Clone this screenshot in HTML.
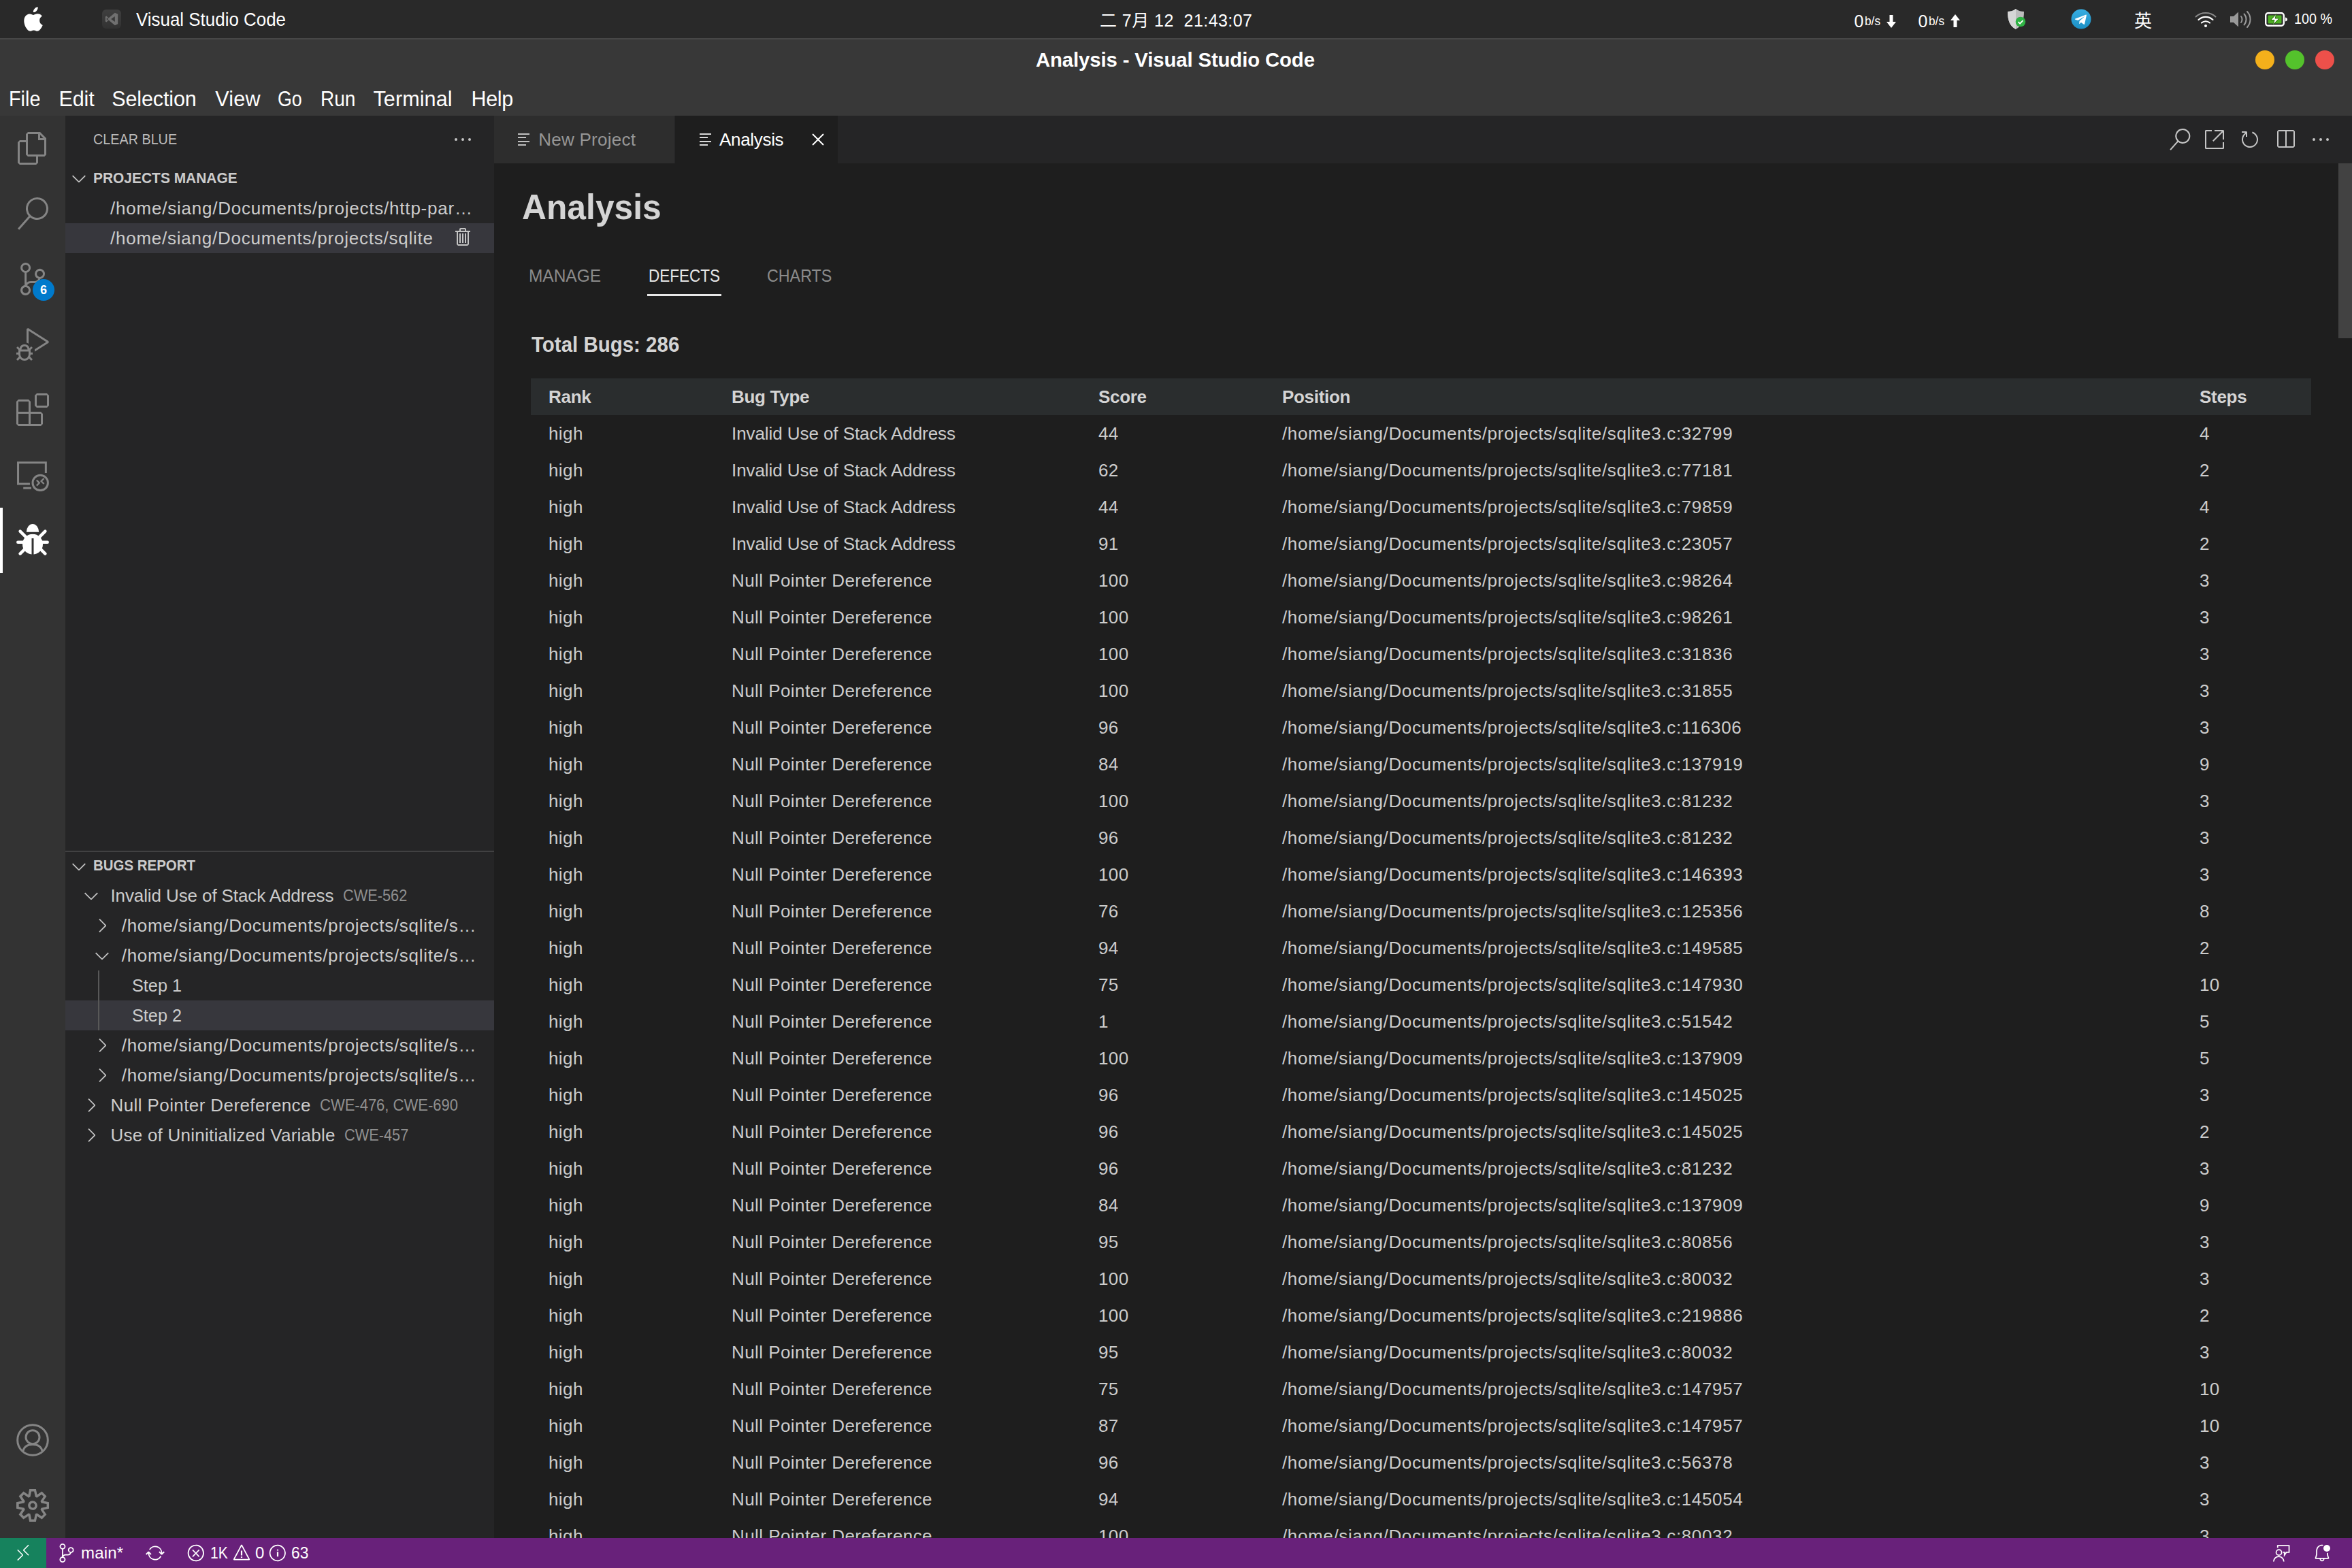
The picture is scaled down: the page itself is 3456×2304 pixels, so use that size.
<!DOCTYPE html>
<html lang="en"><head><meta charset="utf-8"><title>Analysis - Visual Studio Code</title>
<style>
html,body{margin:0;padding:0;}
body{width:3456px;height:2304px;overflow:hidden;background:#1e1e1e;position:relative;font-family:"Liberation Sans","Noto Sans CJK SC",sans-serif;color:#ccc;}
div{box-sizing:border-box;}
.tbl{position:absolute;left:780px;top:556px;width:2616px;}
.row{position:absolute;left:0;width:2616px;height:54px;font-size:26px;line-height:54px;white-space:nowrap;color:#ccc;}
.row span{position:absolute;top:0;}
.c1{left:26px;}.c2{left:295px;}.c3{left:834px;}.c4{left:1104px;}.c5{left:2452px;}
.hd{background:#2a2d2e;font-weight:bold;color:#d4d4d4;}
</style></head><body>

<div style="position:absolute;left:0px;top:0px;width:3456px;height:56px;background:#292929;"></div>
<div style="position:absolute;left:0px;top:56px;width:3456px;height:2px;background:#474747;"></div>
<div style="position:absolute;left:0px;top:58px;width:3456px;height:112px;background:#383838;"></div>
<svg style="position:absolute;left:32px;top:9px" width="32" height="38" viewBox="0 0 170 200" fill="#fff"><path d="M150.4 172.3c-7.4 11.1-15.300 21.900-27.300 22.100-12 .3-15.900-7.100-29.500-7.100-13.700 0-17.900 6.900-29.300 7.400-11.700.400-20.600-11.800-28.100-22.600C20.900 150 9.200 109.500 24.900 82.200c7.800-13.600 21.800-22.100 36.900-22.400 11.500-.2 22.400 7.800 29.500 7.800 7 0 20.200-9.600 34.100-8.200 5.800.2 22.100 2.300 32.600 17.700-.8.600-19.400 11.400-19.200 34 .2 27 23.700 36 24 36.100-.3.600-3.800 12.900-12.400 25.100zM99.200 19.700C105.700 12.100 116.600 6.400 125.600 6c1.200 10.500-3.100 21.100-9.300 28.600-6.300 7.600-16.500 13.500-26.600 12.700-1.400-10.300 3.700-21.100 9.500-27.600z"/></svg>
<div style="position:absolute;left:150px;top:14px;width:28px;height:28px;border-radius:6px;background:linear-gradient(#3f3f3f,#323232)"></div>
<svg style="position:absolute;left:154px;top:18px" width="20" height="20" viewBox="0 0 100 100"><path d="M74 4 L96 14 V86 L74 96 L28 58 L12 72 L4 68 V32 L12 28 L28 42 Z M74 30 L46 50 L74 70 Z M14 40 V60 L26 50 Z" fill="#707070" fill-rule="evenodd"/></svg>
<div style="position:absolute;left:200px;top:14.92px;font-size:27.5px;line-height:1;color:#fff;letter-spacing:0px;white-space:nowrap;transform:scaleX(0.9426);transform-origin:0 0;">Visual Studio Code</div>
<div class="clock" style="position:absolute;left:1616px;top:17.64px;font-size:25px;line-height:1;color:#fff;letter-spacing:0.45px;white-space:nowrap;">二 7月 12&nbsp; 21:43:07</div>
<div style="position:absolute;left:2724.5px;top:19.14px;font-size:25px;line-height:1;color:#fff;letter-spacing:0px;white-space:nowrap;">0</div>
<div style="position:absolute;left:2740px;top:22.26px;font-size:18px;line-height:1;color:#fff;letter-spacing:0px;white-space:nowrap;transform:scaleX(0.9579);transform-origin:0 0;">b/s</div>
<div style="position:absolute;left:2818.5px;top:19.14px;font-size:25px;line-height:1;color:#fff;letter-spacing:0px;white-space:nowrap;">0</div>
<div style="position:absolute;left:2834px;top:22.26px;font-size:18px;line-height:1;color:#fff;letter-spacing:0px;white-space:nowrap;transform:scaleX(0.9579);transform-origin:0 0;">b/s</div>
<svg style="position:absolute;left:2772px;top:22px" width="14" height="19" viewBox="0 0 14 19" fill="#fff"><path d="M4.500 0h5v10h4.500L7 19 0 10h4.500z"/></svg>
<svg style="position:absolute;left:2866px;top:21px" width="14" height="19" viewBox="0 0 14 19" fill="#fff"><path d="M4.500 19h5V9h4.500L7 0 0 9h4.500z"/></svg>
<svg style="position:absolute;left:2949px;top:12px" width="30" height="33" viewBox="0 0 30 33"><path d="M13 1 C9 4 5 5 1 5 C1 18 4 26 13 31 C22 26 25 18 25 5 C21 5 17 4 13 1z" fill="#bdbdbd"/><path d="M13 1 C9 4 5 5 1 5 C1 18 4 26 13 31z" fill="#d6d6d6"/><circle cx="20" cy="20" r="7.300" fill="#2fb344"/><path d="M16.500 20.200l2.600 2.500 4.400-4.600" stroke="#fff" stroke-width="1.800" fill="none"/></svg>
<svg style="position:absolute;left:3043px;top:13px" width="30" height="30" viewBox="0 0 30 30"><defs><linearGradient id="tg" x1="0" y1="0" x2="0" y2="1"><stop offset="0" stop-color="#37aee2"/><stop offset="1" stop-color="#1c8fc4"/></linearGradient></defs><circle cx="15" cy="15" r="14.500" fill="url(#tg)"/><path d="M6.500 14.600l15.200-5.900c.7-.3 1.300.2 1.100 1.200l-2.600 12.200c-.2.900-.7 1.100-1.400.7l-3.900-2.900-1.900 1.800c-.2.200-.4.400-.8.400l.3-4 7.200-6.500c.3-.3-.1-.4-.5-.2l-8.900 5.600-3.800-1.200c-.8-.3-.8-.8.000-1.200z" fill="#fff"/></svg>
<div style="position:absolute;left:3136px;top:16.49px;font-size:26px;line-height:1;color:#fff;letter-spacing:0px;white-space:nowrap;font-family:'Noto Sans CJK SC',sans-serif;">英</div>
<svg style="position:absolute;left:3225px;top:17px" width="32" height="24" viewBox="0 0 32 24" fill="none" stroke-linecap="round"><path d="M1.500 7.500C9.500 0 22.500 0 30.500 7.500" stroke="#8a8a8a" stroke-width="2"/><path d="M5.500 12C11.500 6.500 20.500 6.500 26.500 12" stroke="#fff" stroke-width="2.200"/><path d="M10 16.500c3.500-3 8.500-3 12 0" stroke="#fff" stroke-width="2.200"/><circle cx="16" cy="21" r="2" fill="#fff"/></svg>
<svg style="position:absolute;left:3276px;top:15px" width="34" height="27" viewBox="0 0 34 27" fill="none" stroke-linecap="round"><path d="M1 9h5l7-6.500v22L6 18H1z" fill="#999"/><path d="M17 9c2 2.500 2 6.500 0 9" stroke="#999" stroke-width="2"/><path d="M21.500 5.500c4 4.500 4 11.500 0 16" stroke="#999" stroke-width="2"/><path d="M26 2c6 6.500 6 16.500 0 23" stroke="#999" stroke-width="2"/></svg>
<svg style="position:absolute;left:3328px;top:18px" width="34" height="21" viewBox="0 0 34 21"><rect x="1.200" y="1.200" width="26.600" height="18.600" rx="3.500" fill="none" stroke="#fff" stroke-width="2.400"/><rect x="4.500" y="4.500" width="20" height="12" rx="1" fill="#4caf23"/><path d="M30 7.500c2 .5 3 1.500 3 3s-1 2.500-3 3z" fill="#fff"/><path d="M17 2.500l-8.500 9h5.500l-2.500 7 9.500-9.500h-6z" fill="#fff" stroke="#2c6e12" stroke-width="1"/></svg>
<div style="position:absolute;left:3371px;top:17.25px;font-size:22.5px;line-height:1;color:#fff;letter-spacing:0px;white-space:nowrap;transform:scaleX(0.8778);transform-origin:0 0;">100 %</div>
<div style="position:absolute;left:1522px;top:72.67px;font-size:29.33px;line-height:1;font-weight:bold;color:#fff;letter-spacing:-0.123px;white-space:nowrap;">Analysis - Visual Studio Code</div>
<div style="position:absolute;left:3314px;top:74px;width:28px;height:28px;border-radius:50%;background:#f4b01b"></div>
<div style="position:absolute;left:3358px;top:74px;width:28px;height:28px;border-radius:50%;background:#54c22c"></div>
<div style="position:absolute;left:3402px;top:74px;width:28px;height:28px;border-radius:50%;background:#ed504a"></div>
<div style="position:absolute;left:12.8px;top:130.18px;font-size:30.5px;line-height:1;color:#fff;letter-spacing:0px;white-space:nowrap;transform:scaleX(0.9441);transform-origin:0 0;">File</div>
<div style="position:absolute;left:86.4px;top:130.18px;font-size:30.5px;line-height:1;color:#fff;letter-spacing:-0.053px;white-space:nowrap;">Edit</div>
<div style="position:absolute;left:164.3px;top:130.18px;font-size:30.5px;line-height:1;color:#fff;letter-spacing:-0.134px;white-space:nowrap;">Selection</div>
<div style="position:absolute;left:316.2px;top:130.18px;font-size:30.5px;line-height:1;color:#fff;letter-spacing:0.246px;white-space:nowrap;">View</div>
<div style="position:absolute;left:408.1px;top:130.18px;font-size:30.5px;line-height:1;color:#fff;letter-spacing:0px;white-space:nowrap;transform:scaleX(0.8799);transform-origin:0 0;">Go</div>
<div style="position:absolute;left:470.5px;top:130.18px;font-size:30.5px;line-height:1;color:#fff;letter-spacing:0px;white-space:nowrap;transform:scaleX(0.9186);transform-origin:0 0;">Run</div>
<div style="position:absolute;left:548.5px;top:130.18px;font-size:30.5px;line-height:1;color:#fff;letter-spacing:0.106px;white-space:nowrap;">Terminal</div>
<div style="position:absolute;left:692.5px;top:130.18px;font-size:30.5px;line-height:1;color:#fff;letter-spacing:-0.377px;white-space:nowrap;">Help</div>
<div style="position:absolute;left:0px;top:170px;width:96px;height:2090px;background:#333333;"></div>
<div style="position:absolute;left:24px;top:194px;width:48px;height:48px"><svg viewBox="0 0 24 24" width="48" height="48" fill="#858585" style="display:block;"><path d="M17.5 0h-9L7 1.5V6H2.5L1 7.5v15.07L2.5 24h12.07L16 22.57V18h4.7l1.3-1.43V4.5L17.5 0zm0 2.12l2.38 2.38H17.5V2.12zm-3 20.38h-12v-15H7v9.07L8.5 18h6v4.5zm6-6h-12v-15H16V6h4.5v10.5z"/></svg></div>
<div style="position:absolute;left:24px;top:290px;width:48px;height:48px"><svg viewBox="0 0 24 24" width="48" height="48" fill="#858585" style="display:block;"><path d="M15.25 0a8.25 8.25 0 0 0-6.18 13.72L1 22.88l1.12 1 8.05-9.12A8.251 8.251 0 1 0 15.25.01V0zm0 15a6.75 6.75 0 1 1 0-13.5 6.75 6.75 0 0 1 0 13.5z"/></svg></div>
<div style="position:absolute;left:24px;top:386px;width:48px;height:48px"><svg viewBox="0 0 24 24" width="48" height="48" fill="#858585" style="display:block;"><path d="M21.007 8.222A3.738 3.738 0 0 0 15.045 5.2a3.737 3.737 0 0 0 1.156 6.583 2.988 2.988 0 0 1-2.668 1.67h-2.99a4.456 4.456 0 0 0-2.989 1.165V7.4a3.737 3.737 0 1 0-1.494 0v9.117a3.776 3.776 0 1 0 1.816.099 2.99 2.99 0 0 1 2.668-1.667h2.99a4.484 4.484 0 0 0 4.223-3.039 3.736 3.736 0 0 0 3.25-3.687zM4.565 3.738a2.242 2.242 0 1 1 4.484 0 2.242 2.242 0 0 1-4.484 0zm4.484 16.441a2.242 2.242 0 1 1-4.484 0 2.242 2.242 0 0 1 4.484 0zm8.221-9.715a2.242 2.242 0 1 1 0-4.485 2.242 2.242 0 0 1 0 4.485z"/></svg></div>
<div style="position:absolute;left:24px;top:482px;width:48px;height:48px"><svg viewBox="0 0 24 24" width="48" height="48" fill="#858585" style="display:block;"><path d="M10.94 13.5l-1.32 1.32a3.73 3.73 0 0 0-7.24 0L1.06 13.5 0 14.56l1.72 1.72-.22.22V18H0v1.5h1.5v.08c.077.489.214.966.41 1.42L0 22.94 1.06 24l1.65-1.65A4.308 4.308 0 0 0 6 24a4.31 4.31 0 0 0 3.29-1.65L10.94 24 12 22.94 10.09 21c.198-.464.336-.951.41-1.45v-.1H12V18h-1.5v-1.5l-.22-.22L12 14.56l-1.06-1.06zM6 13.5a2.25 2.25 0 0 1 2.25 2.25h-4.5A2.25 2.25 0 0 1 6 13.5zm3 6a3.33 3.33 0 0 1-3 3 3.33 3.33 0 0 1-3-3v-2.25h6v2.25zm14.76-9.9v1.26L13.5 17.37V15.6l8.5-5.37L9 2v9.46a5.07 5.07 0 0 0-1.5-.72V.63L8.64 0l15.12 9.6z"/></svg></div>
<div style="position:absolute;left:24px;top:578px;width:48px;height:48px"><svg viewBox="0 0 24 24" width="48" height="48" fill="#858585" style="display:block;"><path d="M13.5 1.5L15 0h7.5L24 1.5V9l-1.5 1.5H15L13.5 9V1.5zm1.5 0V9h7.5V1.5H15zM0 15V6l1.5-1.5H9L10.500 6v7.5H18l1.5 1.5v7.5L18 24H1.5L0 22.500V15zm9-1.5V6H1.5v7.5H9zM9 15H1.5v7.5H9V15zm1.5 7.5H18V15h-7.5v7.5z"/></svg></div>
<svg style="position:absolute;left:24px;top:674px" width="48" height="48" viewBox="0 0 24 24" fill="none" stroke="#858585" stroke-width="1.500"><path d="M21.670 10.500V2.900H1.270v15.600h8.700"/><path d="M5.100 21.600h5.900"/><circle cx="17.600" cy="17.700" r="5.600"/><path d="M14.900 15.800l2 2-2 2M20.300 14.500l-2 2 2 2" stroke-width="1.200"/></svg>
<div style="position:absolute;left:0px;top:746px;width:4px;height:96px;background:#ffffff;"></div>
<svg style="position:absolute;left:24px;top:770px" width="48" height="48" viewBox="0 0 48 48" fill="#fff" stroke="#fff" stroke-linecap="round"><path d="M14.800 11.800A9.200 11.800 0 0 1 33.200 11.800z" stroke="none"/><clipPath id="bc"><rect x="0" y="14.500" width="48" height="34"/></clipPath><circle cx="24" cy="29.700" r="15" stroke="none" clip-path="url(#bc)"/><path d="M2.300 26.700h8M37.700 26.700h8M5.600 10.600l8.500 8.500M42.400 10.600l-8.500 8.500M5.600 43.700l8.500-8.500M42.400 43.700l-8.500-8.500" stroke-width="4.500"/><path d="M24 21v24" stroke="#333" stroke-width="3" stroke-linecap="butt"/></svg>
<div style="position:absolute;left:48px;top:410px;width:32px;height:32px;border-radius:50%;background:#007acc;color:#fff;font-size:18px;font-weight:bold;line-height:32px;text-align:center">6</div>
<svg style="position:absolute;left:24px;top:2092px" width="48" height="48" viewBox="0 0 48 48" fill="none" stroke="#858585" stroke-width="3"><circle cx="24" cy="24" r="22.300"/><circle cx="24" cy="19.700" r="10"/><path d="M10 40C11.500 33.500 17 30.600 24 30.600S36.500 33.500 38 40"/></svg>
<div style="position:absolute;left:24px;top:2188px;width:48px;height:48px"><svg viewBox="0 0 24 24" width="48" height="48" fill="#858585" style="display:block;"><path d="M19.85 8.75l4.15.83v4.84l-4.15.83 2.35 3.52-3.43 3.43-3.52-2.35-.83 4.15H9.58l-.83-4.15-3.52 2.35-3.43-3.43 2.35-3.52L0 14.42V9.58l4.15-.83L1.8 5.23 5.23 1.8l3.52 2.35L9.58 0h4.84l.83 4.15 3.52-2.35 3.43 3.43-2.35 3.52zm-1.57 5.07l4-.81v-2l-4-.81-.54-1.3 2.29-3.43-1.43-1.43-3.43 2.29-1.3-.54-.81-4h-2l-.81 4-1.3.54-3.43-2.29-1.43 1.43L6.38 8.9l-.54 1.3-4 .81v2l4 .81.54 1.3-2.29 3.43 1.43 1.43 3.43-2.29 1.3.54.81 4h2l.81-4 1.3-.54 3.43 2.29 1.43-1.43-2.29-3.43.54-1.3zm-8.186-4.672A3.43 3.43 0 0 1 12 8.57 3.44 3.44 0 0 1 15.43 12a3.43 3.43 0 1 1-5.336-2.852zm.956 4.274c.281.188.612.288.95.288A1.7 1.7 0 0 0 13.71 12a1.71 1.71 0 1 0-2.66 1.422z"/></svg></div>
<div style="position:absolute;left:96px;top:170px;width:630px;height:2090px;background:#252526;"></div>
<div style="position:absolute;left:136.6px;top:194.18px;font-size:22px;line-height:1;color:#bbbbbb;letter-spacing:0px;white-space:nowrap;transform:scaleX(0.8989);transform-origin:0 0;">CLEAR BLUE</div>
<div style="position:absolute;left:664px;top:189px;width:32px;height:32px"><svg viewBox="0 0 16 16" width="32" height="32" fill="#c5c5c5" style="display:block;"><path d="M4 8a1 1 0 1 1-2 0 1 1 0 0 1 2 0zm5 0a1 1 0 1 1-2 0 1 1 0 0 1 2 0zm5 0a1 1 0 1 1-2 0 1 1 0 0 1 2 0z"/></svg></div>
<div style="position:absolute;left:100px;top:246px;width:32px;height:32px"><svg viewBox="0 0 16 16" width="32" height="32" fill="#c5c5c5" style="display:block;"><path d="M7.976 10.072l4.357-4.357.62.618L8.284 11h-.618L3 6.333l.619-.618 4.357 4.357z"/></svg></div>
<div style="position:absolute;left:136.6px;top:250.58px;font-size:22px;line-height:1;font-weight:bold;color:#cccccc;letter-spacing:0px;white-space:nowrap;transform:scaleX(0.9516);transform-origin:0 0;">PROJECTS MANAGE</div>
<div style="position:absolute;left:162px;top:292.99px;font-size:26px;line-height:1;color:#ccc;letter-spacing:0.783px;white-space:nowrap;">/home/siang/Documents/projects/http-par…</div>
<div style="position:absolute;left:96px;top:328px;width:630px;height:44px;background:#37373d;"></div>
<div style="position:absolute;left:162px;top:336.99px;font-size:26px;line-height:1;color:#ccc;letter-spacing:0.762px;white-space:nowrap;">/home/siang/Documents/projects/sqlite</div>
<div style="position:absolute;left:665px;top:333px;width:32px;height:32px"><svg viewBox="0 0 16 16" width="32" height="32" fill="#c5c5c5" style="display:block;"><path d="M10 3h3v1h-1v9l-1 1H4l-1-1V4H2V3h3V2a1 1 0 0 1 1-1h3a1 1 0 0 1 1 1v1zM9 2H6v1h3V2zM4 13h7V4H4v9zm2-8H5v7h1V5zm1 0h1v7H7V5zm2 0h1v7H9V5z"/></svg></div>
<div style="position:absolute;left:96px;top:1250px;width:630px;height:2px;background:#414142;"></div>
<div style="position:absolute;left:100px;top:1257px;width:32px;height:32px"><svg viewBox="0 0 16 16" width="32" height="32" fill="#c5c5c5" style="display:block;"><path d="M7.976 10.072l4.357-4.357.62.618L8.284 11h-.618L3 6.333l.619-.618 4.357 4.357z"/></svg></div>
<div style="position:absolute;left:136.6px;top:1261.18px;font-size:22px;line-height:1;font-weight:bold;color:#cccccc;letter-spacing:0px;white-space:nowrap;transform:scaleX(0.9296);transform-origin:0 0;">BUGS REPORT</div>
<div style="position:absolute;left:96px;top:1470px;width:630px;height:44px;background:#37373d;"></div>
<div style="position:absolute;left:144px;top:1426px;width:2px;height:88px;background:#585858;"></div>
<div style="position:absolute;left:118px;top:1300px;width:32px;height:32px"><svg viewBox="0 0 16 16" width="32" height="32" fill="#c5c5c5" style="display:block;"><path d="M7.976 10.072l4.357-4.357.62.618L8.284 11h-.618L3 6.333l.619-.618 4.357 4.357z"/></svg></div><div style="position:absolute;left:162.5px;top:1302.99px;font-size:26px;line-height:1;color:#ccc;letter-spacing:-0.109px;white-space:nowrap;">Invalid Use of Stack Address</div><div style="position:absolute;left:503.5px;top:1305.19px;font-size:23.4px;line-height:1;color:#8f8f8f;letter-spacing:0px;white-space:nowrap;transform:scaleX(0.9297);transform-origin:0 0;">CWE-562</div>
<div style="position:absolute;left:134px;top:1344px;width:32px;height:32px"><svg viewBox="0 0 16 16" width="32" height="32" fill="#c5c5c5" style="display:block;"><path d="M10.072 8.024L5.715 3.667l.618-.62L11 7.716v.618L6.333 13l-.618-.619 4.357-4.357z"/></svg></div><div style="position:absolute;left:178.7px;top:1346.99px;font-size:26px;line-height:1;color:#ccc;letter-spacing:0.719px;white-space:nowrap;">/home/siang/Documents/projects/sqlite/s…</div>
<div style="position:absolute;left:134px;top:1388px;width:32px;height:32px"><svg viewBox="0 0 16 16" width="32" height="32" fill="#c5c5c5" style="display:block;"><path d="M7.976 10.072l4.357-4.357.62.618L8.284 11h-.618L3 6.333l.619-.618 4.357 4.357z"/></svg></div><div style="position:absolute;left:178.7px;top:1390.99px;font-size:26px;line-height:1;color:#ccc;letter-spacing:0.719px;white-space:nowrap;">/home/siang/Documents/projects/sqlite/s…</div>
<div style="position:absolute;left:193.9px;top:1434.99px;font-size:26px;line-height:1;color:#ccc;letter-spacing:0px;white-space:nowrap;transform:scaleX(0.9711);transform-origin:0 0;">Step 1</div>
<div style="position:absolute;left:193.9px;top:1478.99px;font-size:26px;line-height:1;color:#ccc;letter-spacing:0px;white-space:nowrap;transform:scaleX(0.9711);transform-origin:0 0;">Step 2</div>
<div style="position:absolute;left:134px;top:1520px;width:32px;height:32px"><svg viewBox="0 0 16 16" width="32" height="32" fill="#c5c5c5" style="display:block;"><path d="M10.072 8.024L5.715 3.667l.618-.62L11 7.716v.618L6.333 13l-.618-.619 4.357-4.357z"/></svg></div><div style="position:absolute;left:178.7px;top:1522.99px;font-size:26px;line-height:1;color:#ccc;letter-spacing:0.719px;white-space:nowrap;">/home/siang/Documents/projects/sqlite/s…</div>
<div style="position:absolute;left:134px;top:1564px;width:32px;height:32px"><svg viewBox="0 0 16 16" width="32" height="32" fill="#c5c5c5" style="display:block;"><path d="M10.072 8.024L5.715 3.667l.618-.62L11 7.716v.618L6.333 13l-.618-.619 4.357-4.357z"/></svg></div><div style="position:absolute;left:178.7px;top:1566.99px;font-size:26px;line-height:1;color:#ccc;letter-spacing:0.719px;white-space:nowrap;">/home/siang/Documents/projects/sqlite/s…</div>
<div style="position:absolute;left:118px;top:1608px;width:32px;height:32px"><svg viewBox="0 0 16 16" width="32" height="32" fill="#c5c5c5" style="display:block;"><path d="M10.072 8.024L5.715 3.667l.618-.62L11 7.716v.618L6.333 13l-.618-.619 4.357-4.357z"/></svg></div><div style="position:absolute;left:162.5px;top:1610.99px;font-size:26px;line-height:1;color:#ccc;letter-spacing:0.404px;white-space:nowrap;">Null Pointer Dereference</div><div style="position:absolute;left:469.5px;top:1613.19px;font-size:23.4px;line-height:1;color:#8f8f8f;letter-spacing:0px;white-space:nowrap;transform:scaleX(0.9404);transform-origin:0 0;">CWE-476, CWE-690</div>
<div style="position:absolute;left:118px;top:1652px;width:32px;height:32px"><svg viewBox="0 0 16 16" width="32" height="32" fill="#c5c5c5" style="display:block;"><path d="M10.072 8.024L5.715 3.667l.618-.62L11 7.716v.618L6.333 13l-.618-.619 4.357-4.357z"/></svg></div><div style="position:absolute;left:162.5px;top:1654.99px;font-size:26px;line-height:1;color:#ccc;letter-spacing:0.241px;white-space:nowrap;">Use of Uninitialized Variable</div><div style="position:absolute;left:505.5px;top:1657.19px;font-size:23.4px;line-height:1;color:#8f8f8f;letter-spacing:0px;white-space:nowrap;transform:scaleX(0.9297);transform-origin:0 0;">CWE-457</div>
<div style="position:absolute;left:726px;top:170px;width:2730px;height:70px;background:#252526;"></div>
<div style="position:absolute;left:726px;top:170px;width:265px;height:70px;background:#2d2d2d;"></div>
<div style="position:absolute;left:992px;top:170px;width:239px;height:70px;background:#1e1e1e;"></div>
<div style="position:absolute;left:761px;top:195.5px;width:17px;height:2px;background:#c0c0c0;"></div><div style="position:absolute;left:761px;top:201px;width:12px;height:2px;background:#c0c0c0;"></div><div style="position:absolute;left:761px;top:206.5px;width:17px;height:2px;background:#c0c0c0;"></div><div style="position:absolute;left:761px;top:212px;width:12px;height:2px;background:#c0c0c0;"></div>
<div style="position:absolute;left:791.2px;top:191.99px;font-size:26px;line-height:1;color:#969696;letter-spacing:0.264px;white-space:nowrap;">New Project</div>
<div style="position:absolute;left:1027.5px;top:195.5px;width:17px;height:2px;background:#d8d8d8;"></div><div style="position:absolute;left:1027.5px;top:201px;width:12px;height:2px;background:#d8d8d8;"></div><div style="position:absolute;left:1027.5px;top:206.5px;width:17px;height:2px;background:#d8d8d8;"></div><div style="position:absolute;left:1027.5px;top:212px;width:12px;height:2px;background:#d8d8d8;"></div>
<div style="position:absolute;left:1057px;top:191.99px;font-size:26px;line-height:1;color:#fff;letter-spacing:-0.317px;white-space:nowrap;">Analysis</div>
<div style="position:absolute;left:1186px;top:189px;width:32px;height:32px"><svg viewBox="0 0 16 16" width="32" height="32" fill="#fff" style="display:block;"><path d="M8 8.707l3.646 3.647.708-.707L8.707 8l3.647-3.646-.707-.708L8 7.293 4.354 3.646l-.707.708L7.293 8l-3.646 3.646.707.708L8 8.707z"/></svg></div>
<div style="position:absolute;left:3186.5px;top:188.5px;width:32px;height:32px"><svg viewBox="0 0 24 24" width="32" height="32" fill="#c5c5c5" style="display:block;"><path d="M15.25 0a8.25 8.25 0 0 0-6.18 13.72L1 22.88l1.12 1 8.05-9.12A8.251 8.251 0 1 0 15.25.01V0zm0 15a6.75 6.75 0 1 1 0-13.5 6.75 6.75 0 0 1 0 13.5z"/></svg></div>
<div style="position:absolute;left:3238px;top:188.5px;width:32px;height:32px"><svg viewBox="0 0 16 16" width="32" height="32" fill="#c5c5c5" style="display:block;"><path d="M1.5 1H6v1H2v12h12v-4h1v4.5l-.5.5h-13l-.5-.5v-13l.5-.5z"/><path d="M15 1.5V8h-1V2.707L7.243 9.465l-.707-.708L13.293 2H8V1h6.5l.5.5z"/></svg></div>
<div style="position:absolute;left:3290px;top:188.5px;width:32px;height:32px"><svg viewBox="0 0 16 16" width="32" height="32" fill="#c5c5c5" style="display:block;"><path d="M4.681 3H2V2h3.500l.5.5V6H5V4a5 5 0 1 0 4.53-.761l.302-.954A6 6 0 1 1 4.681 3z"/></svg></div>
<div style="position:absolute;left:3342px;top:188.5px;width:32px;height:32px"><svg viewBox="0 0 16 16" width="32" height="32" fill="#c5c5c5" style="display:block;"><path d="M14 1H3L2 2v11l1 1h11l1-1V2l-1-1zM8 13H3V2h5v11zm6 0H9V2h5v11z"/></svg></div>
<div style="position:absolute;left:3394px;top:188.5px;width:32px;height:32px"><svg viewBox="0 0 16 16" width="32" height="32" fill="#c5c5c5" style="display:block;"><path d="M4 8a1 1 0 1 1-2 0 1 1 0 0 1 2 0zm5 0a1 1 0 1 1-2 0 1 1 0 0 1 2 0zm5 0a1 1 0 1 1-2 0 1 1 0 0 1 2 0z"/></svg></div>
<div style="position:absolute;left:3436px;top:240px;width:20px;height:257px;background:#424242;"></div>
<div style="position:absolute;left:767px;top:278.28px;font-size:52px;line-height:1;font-weight:bold;color:#d4d4d4;letter-spacing:0px;white-space:nowrap;transform:scaleX(0.9575);transform-origin:0 0;">Analysis</div>
<div style="position:absolute;left:777px;top:391.59px;font-size:26px;line-height:1;color:#8b8b8b;letter-spacing:0px;white-space:nowrap;transform:scaleX(0.9407);transform-origin:0 0;">MANAGE</div>
<div style="position:absolute;left:953px;top:391.59px;font-size:26px;line-height:1;color:#e7e7e7;letter-spacing:0px;white-space:nowrap;transform:scaleX(0.8653);transform-origin:0 0;">DEFECTS</div>
<div style="position:absolute;left:1127px;top:391.59px;font-size:26px;line-height:1;color:#8b8b8b;letter-spacing:0px;white-space:nowrap;transform:scaleX(0.8954);transform-origin:0 0;">CHARTS</div>
<div style="position:absolute;left:950.5px;top:432px;width:109px;height:3px;background:#e7e7e7;"></div>
<div style="position:absolute;left:781px;top:490.79px;font-size:31.2px;line-height:1;font-weight:bold;color:#d4d4d4;letter-spacing:0px;white-space:nowrap;transform:scaleX(0.9452);transform-origin:0 0;">Total Bugs: 286</div>
<div class="tbl">
<div class="row hd" style="top:0"><span class="c1" style="letter-spacing:-0.3px">Rank</span><span class="c2" style="letter-spacing:-0.3px">Bug Type</span><span class="c3" style="letter-spacing:-0.3px">Score</span><span class="c4" style="letter-spacing:-0.3px">Position</span><span class="c5" style="letter-spacing:-0.3px">Steps</span></div>
<style>.h{letter-spacing:0.414px}.i{letter-spacing:-0.072px}.n{letter-spacing:0.43px}.p{letter-spacing:0.633px}.d{letter-spacing:0.4px}</style>
<div class="row" style="top:54px"><span class="c1 h">high</span><span class="c2 i">Invalid Use of Stack Address</span><span class="c3 d">44</span><span class="c4 p">/home/siang/Documents/projects/sqlite/sqlite3.c:32799</span><span class="c5 d">4</span></div>
<div class="row" style="top:108px"><span class="c1 h">high</span><span class="c2 i">Invalid Use of Stack Address</span><span class="c3 d">62</span><span class="c4 p">/home/siang/Documents/projects/sqlite/sqlite3.c:77181</span><span class="c5 d">2</span></div>
<div class="row" style="top:162px"><span class="c1 h">high</span><span class="c2 i">Invalid Use of Stack Address</span><span class="c3 d">44</span><span class="c4 p">/home/siang/Documents/projects/sqlite/sqlite3.c:79859</span><span class="c5 d">4</span></div>
<div class="row" style="top:216px"><span class="c1 h">high</span><span class="c2 i">Invalid Use of Stack Address</span><span class="c3 d">91</span><span class="c4 p">/home/siang/Documents/projects/sqlite/sqlite3.c:23057</span><span class="c5 d">2</span></div>
<div class="row" style="top:270px"><span class="c1 h">high</span><span class="c2 n">Null Pointer Dereference</span><span class="c3 d">100</span><span class="c4 p">/home/siang/Documents/projects/sqlite/sqlite3.c:98264</span><span class="c5 d">3</span></div>
<div class="row" style="top:324px"><span class="c1 h">high</span><span class="c2 n">Null Pointer Dereference</span><span class="c3 d">100</span><span class="c4 p">/home/siang/Documents/projects/sqlite/sqlite3.c:98261</span><span class="c5 d">3</span></div>
<div class="row" style="top:378px"><span class="c1 h">high</span><span class="c2 n">Null Pointer Dereference</span><span class="c3 d">100</span><span class="c4 p">/home/siang/Documents/projects/sqlite/sqlite3.c:31836</span><span class="c5 d">3</span></div>
<div class="row" style="top:432px"><span class="c1 h">high</span><span class="c2 n">Null Pointer Dereference</span><span class="c3 d">100</span><span class="c4 p">/home/siang/Documents/projects/sqlite/sqlite3.c:31855</span><span class="c5 d">3</span></div>
<div class="row" style="top:486px"><span class="c1 h">high</span><span class="c2 n">Null Pointer Dereference</span><span class="c3 d">96</span><span class="c4 p">/home/siang/Documents/projects/sqlite/sqlite3.c:116306</span><span class="c5 d">3</span></div>
<div class="row" style="top:540px"><span class="c1 h">high</span><span class="c2 n">Null Pointer Dereference</span><span class="c3 d">84</span><span class="c4 p">/home/siang/Documents/projects/sqlite/sqlite3.c:137919</span><span class="c5 d">9</span></div>
<div class="row" style="top:594px"><span class="c1 h">high</span><span class="c2 n">Null Pointer Dereference</span><span class="c3 d">100</span><span class="c4 p">/home/siang/Documents/projects/sqlite/sqlite3.c:81232</span><span class="c5 d">3</span></div>
<div class="row" style="top:648px"><span class="c1 h">high</span><span class="c2 n">Null Pointer Dereference</span><span class="c3 d">96</span><span class="c4 p">/home/siang/Documents/projects/sqlite/sqlite3.c:81232</span><span class="c5 d">3</span></div>
<div class="row" style="top:702px"><span class="c1 h">high</span><span class="c2 n">Null Pointer Dereference</span><span class="c3 d">100</span><span class="c4 p">/home/siang/Documents/projects/sqlite/sqlite3.c:146393</span><span class="c5 d">3</span></div>
<div class="row" style="top:756px"><span class="c1 h">high</span><span class="c2 n">Null Pointer Dereference</span><span class="c3 d">76</span><span class="c4 p">/home/siang/Documents/projects/sqlite/sqlite3.c:125356</span><span class="c5 d">8</span></div>
<div class="row" style="top:810px"><span class="c1 h">high</span><span class="c2 n">Null Pointer Dereference</span><span class="c3 d">94</span><span class="c4 p">/home/siang/Documents/projects/sqlite/sqlite3.c:149585</span><span class="c5 d">2</span></div>
<div class="row" style="top:864px"><span class="c1 h">high</span><span class="c2 n">Null Pointer Dereference</span><span class="c3 d">75</span><span class="c4 p">/home/siang/Documents/projects/sqlite/sqlite3.c:147930</span><span class="c5 d">10</span></div>
<div class="row" style="top:918px"><span class="c1 h">high</span><span class="c2 n">Null Pointer Dereference</span><span class="c3 d">1</span><span class="c4 p">/home/siang/Documents/projects/sqlite/sqlite3.c:51542</span><span class="c5 d">5</span></div>
<div class="row" style="top:972px"><span class="c1 h">high</span><span class="c2 n">Null Pointer Dereference</span><span class="c3 d">100</span><span class="c4 p">/home/siang/Documents/projects/sqlite/sqlite3.c:137909</span><span class="c5 d">5</span></div>
<div class="row" style="top:1026px"><span class="c1 h">high</span><span class="c2 n">Null Pointer Dereference</span><span class="c3 d">96</span><span class="c4 p">/home/siang/Documents/projects/sqlite/sqlite3.c:145025</span><span class="c5 d">3</span></div>
<div class="row" style="top:1080px"><span class="c1 h">high</span><span class="c2 n">Null Pointer Dereference</span><span class="c3 d">96</span><span class="c4 p">/home/siang/Documents/projects/sqlite/sqlite3.c:145025</span><span class="c5 d">2</span></div>
<div class="row" style="top:1134px"><span class="c1 h">high</span><span class="c2 n">Null Pointer Dereference</span><span class="c3 d">96</span><span class="c4 p">/home/siang/Documents/projects/sqlite/sqlite3.c:81232</span><span class="c5 d">3</span></div>
<div class="row" style="top:1188px"><span class="c1 h">high</span><span class="c2 n">Null Pointer Dereference</span><span class="c3 d">84</span><span class="c4 p">/home/siang/Documents/projects/sqlite/sqlite3.c:137909</span><span class="c5 d">9</span></div>
<div class="row" style="top:1242px"><span class="c1 h">high</span><span class="c2 n">Null Pointer Dereference</span><span class="c3 d">95</span><span class="c4 p">/home/siang/Documents/projects/sqlite/sqlite3.c:80856</span><span class="c5 d">3</span></div>
<div class="row" style="top:1296px"><span class="c1 h">high</span><span class="c2 n">Null Pointer Dereference</span><span class="c3 d">100</span><span class="c4 p">/home/siang/Documents/projects/sqlite/sqlite3.c:80032</span><span class="c5 d">3</span></div>
<div class="row" style="top:1350px"><span class="c1 h">high</span><span class="c2 n">Null Pointer Dereference</span><span class="c3 d">100</span><span class="c4 p">/home/siang/Documents/projects/sqlite/sqlite3.c:219886</span><span class="c5 d">2</span></div>
<div class="row" style="top:1404px"><span class="c1 h">high</span><span class="c2 n">Null Pointer Dereference</span><span class="c3 d">95</span><span class="c4 p">/home/siang/Documents/projects/sqlite/sqlite3.c:80032</span><span class="c5 d">3</span></div>
<div class="row" style="top:1458px"><span class="c1 h">high</span><span class="c2 n">Null Pointer Dereference</span><span class="c3 d">75</span><span class="c4 p">/home/siang/Documents/projects/sqlite/sqlite3.c:147957</span><span class="c5 d">10</span></div>
<div class="row" style="top:1512px"><span class="c1 h">high</span><span class="c2 n">Null Pointer Dereference</span><span class="c3 d">87</span><span class="c4 p">/home/siang/Documents/projects/sqlite/sqlite3.c:147957</span><span class="c5 d">10</span></div>
<div class="row" style="top:1566px"><span class="c1 h">high</span><span class="c2 n">Null Pointer Dereference</span><span class="c3 d">96</span><span class="c4 p">/home/siang/Documents/projects/sqlite/sqlite3.c:56378</span><span class="c5 d">3</span></div>
<div class="row" style="top:1620px"><span class="c1 h">high</span><span class="c2 n">Null Pointer Dereference</span><span class="c3 d">94</span><span class="c4 p">/home/siang/Documents/projects/sqlite/sqlite3.c:145054</span><span class="c5 d">3</span></div>
<div class="row" style="top:1674px"><span class="c1 h">high</span><span class="c2 n">Null Pointer Dereference</span><span class="c3 d">100</span><span class="c4 p">/home/siang/Documents/projects/sqlite/sqlite3.c:80032</span><span class="c5 d">3</span></div>
</div>
<div style="position:absolute;left:0px;top:2260px;width:3456px;height:44px;background:#68217a;"></div>
<div style="position:absolute;left:0px;top:2260px;width:68px;height:44px;background:#16825d;"></div>
<div style="position:absolute;left:20px;top:2268px;width:28px;height:28px"><svg viewBox="0 0 16 16" width="28" height="28" fill="#fff" style="display:block;"><path d="M12.904 9.570L8.928 5.596l3.976-3.976-.619-.62L8 5.286v.619l4.285 4.285.62-.618zM3 5.620l4.072 4.070L3 13.763l.619.618L8 10v-.619L3.619 5 3 5.619z"/></svg></div>
<div style="position:absolute;left:84px;top:2268px;width:28px;height:28px"><svg viewBox="0 0 24 24" width="28" height="28" fill="#fff" style="display:block;"><path d="M21.007 8.222A3.738 3.738 0 0 0 15.045 5.2a3.737 3.737 0 0 0 1.156 6.583 2.988 2.988 0 0 1-2.668 1.67h-2.99a4.456 4.456 0 0 0-2.989 1.165V7.4a3.737 3.737 0 1 0-1.494 0v9.117a3.776 3.776 0 1 0 1.816.099 2.99 2.99 0 0 1 2.668-1.667h2.99a4.484 4.484 0 0 0 4.223-3.039 3.736 3.736 0 0 0 3.25-3.687zM4.565 3.738a2.242 2.242 0 1 1 4.484 0 2.242 2.242 0 0 1-4.484 0zm4.484 16.441a2.242 2.242 0 1 1-4.484 0 2.242 2.242 0 0 1 4.484 0zm8.221-9.715a2.242 2.242 0 1 1 0-4.485 2.242 2.242 0 0 1 0 4.485z"/></svg></div>
<div style="position:absolute;left:119px;top:2269.68px;font-size:24px;line-height:1;color:#fff;letter-spacing:0.16px;white-space:nowrap;">main*</div>
<div style="position:absolute;left:213.5px;top:2268px;width:28px;height:28px"><svg viewBox="0 0 16 16" width="28" height="28" fill="#fff" style="display:block;"><path d="M2.006 8.267L.78 9.5 0 8.73l2.09-2.07.76.01 2.09 2.12-.76.76-1.167-1.18a5 5 0 0 0 9.4 1.983l.813.597a6 6 0 0 1-11.22-2.683zm10.99-.466L11.76 6.55l-.76.76 2.09 2.11.76.01 2.09-2.07-.75-.76-1.194 1.18a6 6 0 0 0-11.11-2.92l.81.594a5 5 0 0 1 9.3 2.346z"/></svg></div>
<div style="position:absolute;left:273.5px;top:2268px;width:28px;height:28px"><svg viewBox="0 0 16 16" width="28" height="28" fill="#fff" style="display:block;"><path d="M8.6 1c1.6.1 3.1.9 4.2 2 1.3 1.4 2 3.1 2 5.1 0 1.6-.6 3.1-1.6 4.400-1 1.2-2.4 2.1-4 2.4-1.6.3-3.2.1-4.600-.7-1.4-.8-2.5-2-3.1-3.5C.9 9.200.8 7.500 1.300 6c.5-1.6 1.400-2.900 2.800-3.800C5.400 1.300 7 .9 8.600 1zm.5 12.900c1.300-.3 2.500-1 3.400-2.100.8-1.100 1.300-2.400 1.200-3.800 0-1.600-.6-3.200-1.700-4.300-1-1-2.200-1.600-3.600-1.700-1.300-.1-2.700.2-3.800 1-1.100.8-1.900 1.900-2.300 3.300-.4 1.300-.4 2.700.2 4 .6 1.300 1.500 2.300 2.700 3 1.200.7 2.600.9 3.900.6zM7.900 7.500L10.300 5l.7.7-2.400 2.500 2.400 2.500-.7.7-2.400-2.500-2.400 2.500-.7-.7 2.400-2.500-2.400-2.500.7-.7 2.400 2.500z"/></svg></div>
<div style="position:absolute;left:308.6px;top:2269.68px;font-size:24px;line-height:1;color:#fff;letter-spacing:0px;white-space:nowrap;transform:scaleX(0.8788);transform-origin:0 0;">1K</div>
<div style="position:absolute;left:341px;top:2268px;width:28px;height:28px"><svg viewBox="0 0 16 16" width="28" height="28" fill="#fff" style="display:block;"><path d="M7.560 1h.88l6.540 12.260-.44.740H1.440L1 13.260 7.560 1zM8 2.280L2.280 13H13.700L8 2.280zM8.625 12v-1h-1.250v1h1.250zm-1.250-2V6h1.250v4h-1.250z"/></svg></div>
<div style="position:absolute;left:375px;top:2269.68px;font-size:24px;line-height:1;color:#fff;letter-spacing:0px;white-space:nowrap;">0</div>
<div style="position:absolute;left:394px;top:2268px;width:28px;height:28px"><svg viewBox="0 0 16 16" width="28" height="28" fill="#fff" style="display:block;"><path d="M8.568 1.031A6.800 6.800 0 0 1 12.760 3.050a7.060 7.060 0 0 1 .46 9.390 6.850 6.850 0 0 1-8.580 1.740 7 7 0 0 1-3.120-3.500 7.120 7.120 0 0 1-.23-4.710 7 7 0 0 1 2.770-3.790 6.800 6.800 0 0 1 4.508-1.149zM9.040 13.880a5.890 5.890 0 0 0 3.410-2.070 6.070 6.070 0 0 0-.4-8.060 5.820 5.820 0 0 0-7.430-.74 6.060 6.060 0 0 0 .5 10.290 5.810 5.810 0 0 0 3.920.58zM7.375 6h1.250V5h-1.250v1zm1.250 1v4h-1.250V7h1.250z"/></svg></div>
<div style="position:absolute;left:428px;top:2269.68px;font-size:24px;line-height:1;color:#fff;letter-spacing:0px;white-space:nowrap;transform:scaleX(0.9477);transform-origin:0 0;">63</div>
<svg style="position:absolute;left:3338px;top:2268px" width="28" height="28" viewBox="0 0 16 16" fill="none" stroke="#fff" stroke-width="1"><path d="M5 3.600V1.760h9.600V7.400H12.300L10.700 9.800V7.400H9.600"/><circle cx="6.060" cy="7.500" r="2.300"/><path d="M1.600 15.200a4.300 4.300 0 0 1 8.600 0"/></svg>
<div style="position:absolute;left:3398px;top:2268px;width:28px;height:28px"><svg viewBox="0 0 16 16" width="28" height="28" fill="#fff" style="display:block;"><path d="M13.377 10.573a7.630 7.630 0 0 1-.383-2.380V6.195a5.115 5.115 0 0 0-1.268-3.446 5.138 5.138 0 0 0-3.242-1.722c-.694-.072-1.400 0-2.070.227-.67.215-1.280.574-1.794 1.053a4.923 4.923 0 0 0-1.208 1.675 5.067 5.067 0 0 0-.431 2.022v2.200a7.610 7.610 0 0 1-.383 2.370L2 12.343l.479.658h3.505c0 .526.215 1.040.586 1.412.37.37.885.586 1.412.586.526 0 1.040-.215 1.411-.586s.587-.886.587-1.412h3.505l.478-.658-.586-1.770zm-4.690 3.147a.997.997 0 0 1-.705.299.997.997 0 0 1-.706-.3.997.997 0 0 1-.3-.705h1.999a.939.939 0 0 1-.287.706zm-5.515-1.710l.371-1.114a8.633 8.633 0 0 0 .443-2.691V6.004c0-.563.12-1.113.347-1.616.227-.514.55-.969.969-1.340.419-.382.91-.67 1.436-.837.538-.18 1.100-.24 1.650-.18a4.147 4.147 0 0 1 2.597 1.400 4.133 4.133 0 0 1 1.004 2.776v2.010c0 .909.144 1.818.443 2.691l.371 1.113h-9.630v-.012z"/></svg></div>
<div style="position:absolute;left:3412px;top:2268px;width:14px;height:14px;border-radius:50%;background:#68217a"></div>
<div style="position:absolute;left:3413.800px;top:2269.900px;width:10.400px;height:10.400px;border-radius:50%;background:#fff"></div>
</body></html>
